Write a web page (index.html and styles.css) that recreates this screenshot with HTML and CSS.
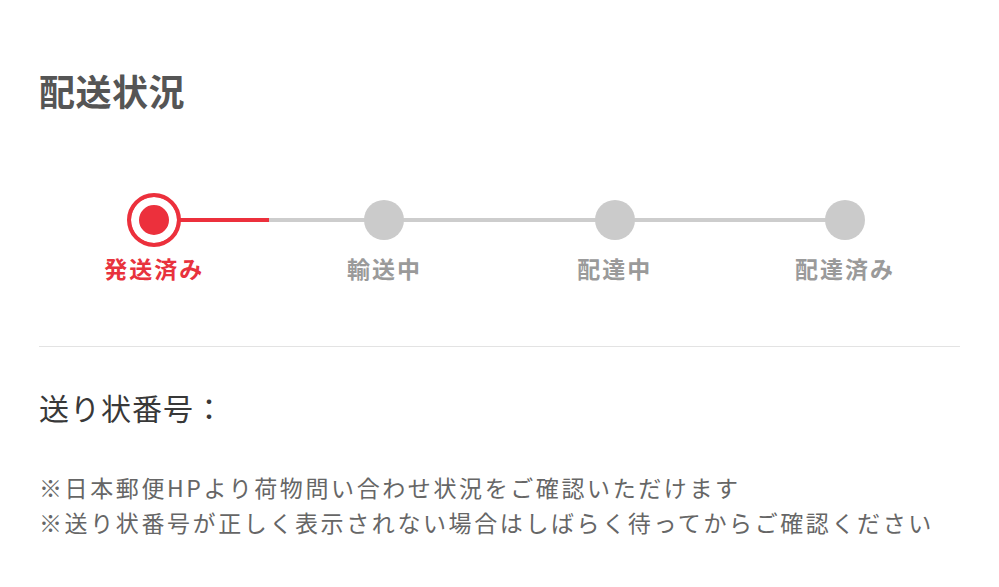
FILE: index.html
```html
<!DOCTYPE html>
<html lang="ja">
<head>
  <meta charset="UTF-8">
  <title>配送状況</title>
  <link rel="stylesheet" href="styles.css">
</head>
<body>

<div class="page">
  <h2 class="title">配送状況</h2>

  <div class="stepper">
    <div class="step done">
      <div class="marker"><span class="dot"></span></div>
      <div class="label">発送済み</div>
    </div>
    <div class="step">
      <div class="marker"><span class="dot"></span></div>
      <div class="label">輸送中</div>
    </div>
    <div class="step">
      <div class="marker"><span class="dot"></span></div>
      <div class="label">配達中</div>
    </div>
    <div class="step">
      <div class="marker"><span class="dot"></span></div>
      <div class="label">配達済み</div>
    </div>
  </div>

  <div class="tracking">
    <div class="tracking-title">送り状番号：</div>
    <p class="note">※日本郵便HPより荷物問い合わせ状況をご確認いただけます<br>※送り状番号が正しく表示されない場合はしばらく待ってからご確認ください</p>
  </div>
</div>

</body>
</html>
```

FILE: styles.css
```css
* {
  box-sizing: border-box;
}

body {
  margin: 0;
  background: #fff;
  font-family: "Noto Sans CJK JP", "Noto Sans", sans-serif;
  color: #333;
}

.page {
  padding: 68px 39px 0;
}

.title {
  margin: 0;
  font-size: 36px;
  line-height: 44px;
  font-weight: 700;
  color: #555;
  letter-spacing: 0.5px;
}

/* stepper */
.stepper {
  display: flex;
  margin-top: 81px;
  padding-bottom: 63px;
  border-bottom: 1px solid #e3e3e3;
}

.step {
  flex: 1;
  display: flex;
  flex-direction: column;
  align-items: center;
}

.marker {
  position: relative;
  width: 100%;
  height: 54px;
  display: flex;
  justify-content: center;
  align-items: center;
}

.marker::before, .marker::after {
  content: "";
  position: absolute;
  top: 25px;
  height: 4px;
  width: 50%;
  background: #cdcdcd;
}

.marker::before {
  left: 0;
}

.marker::after {
  right: 0;
}

.step:first-child .marker::before,
.step:last-child .marker::after {
  display: none;
}

.step.done .marker::after {
  background: #ec303c;
}

.dot {
  position: relative;
  z-index: 1;
  width: 40px;
  height: 40px;
  border-radius: 50%;
  background: #cbcbcb;
}

.step.done .dot {
  width: 54px;
  height: 54px;
  background: #ec303c;
  border: 4px solid #ec303c;
  box-shadow: inset 0 0 0 8px #fff;
}

.label {
  margin-top: 6px;
  font-size: 23px;
  line-height: 30px;
  font-weight: 700;
  letter-spacing: 2px;
  color: #9a9a9a;
}

.step.done .label {
  color: #e8323d;
}

/* tracking */
.tracking {
  padding-top: 40px;
}

.tracking-title {
  font-size: 30px;
  line-height: 40px;
  letter-spacing: 1px;
  color: #383838;
}

.note {
  margin: 43px 0 0;
  font-size: 23px;
  line-height: 35px;
  letter-spacing: 2.6px;
  color: #666;
}
```
